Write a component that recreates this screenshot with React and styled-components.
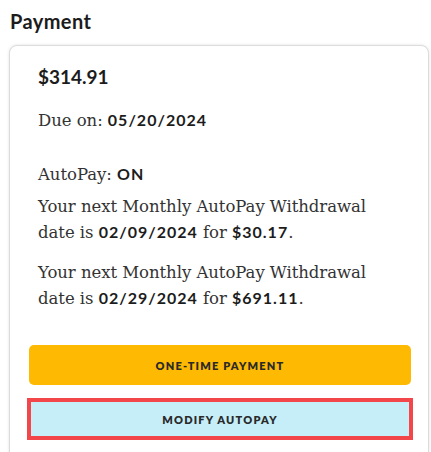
import React from 'react';
import styled, { createGlobalStyle } from 'styled-components';

const GlobalStyle = createGlobalStyle`
  body {
    margin: 0;
    background: #fff;
    font-family: "Lato", "Noto Sans", sans-serif;
    color: #1c1c1c;
  }
`;

const Page = styled.div`
  width: 431px;
  height: 452px;
  overflow: hidden;
  padding: 8px 2px 0 9px;
  box-sizing: border-box;
`;

const Heading = styled.h2`
  margin: 0 0 11px 1px;
  font-family: "Lato", sans-serif;
  font-weight: 700;
  font-size: 20px;
  letter-spacing: 0.4px;
  line-height: 26px;
  color: #1c1c1c;
`;

const Card = styled.div`
  border: 1px solid #dcdcdc;
  border-radius: 8px;
  box-shadow: 0 0 3px rgba(0, 0, 0, 0.12);
  padding: 19px 17px 40px 19px;
  background: #fff;
`;

const Details = styled.div`
  padding: 0 20px 0 9px;
`;

const Amount = styled.div`
  font-family: "Lato", sans-serif;
  font-weight: 700;
  font-size: 19px;
  line-height: 24px;
  margin-bottom: 19px;
`;

const Line = styled.p`
  margin: 0 0 ${(p) => p.$gap || 0}px;
  font-family: "DejaVu Serif", serif;
  font-size: 16.5px;
  line-height: 26px;
  color: #333;
  letter-spacing: -0.05px;
`;

const Strong = styled.b`
  font-family: "Lato", sans-serif;
  font-weight: 700;
  font-size: 16px;
  line-height: 1;
  letter-spacing: 1px;
  color: #1c1c1c;
`;

const Actions = styled.div`
  display: flex;
  flex-direction: column;
  gap: 13px;
  margin-top: 33px;
`;

const Button = styled.button`
  display: block;
  height: ${(p) => (p.$outlined ? 42 : 40)}px;
  border: ${(p) => (p.$outlined ? '4px solid #f2464b' : 'none')};
  border-radius: ${(p) => (p.$outlined ? 0 : 5)}px;
  background: ${(p) => p.$bg};
  font-family: "Lato", sans-serif;
  font-weight: 800;
  font-size: 11px;
  letter-spacing: 1.2px;
  color: #2a2a2a;
  box-sizing: border-box;
  margin: ${(p) => (p.$outlined ? '0 -2px' : '0')};
  width: ${(p) => (p.$outlined ? 'calc(100% + 4px)' : '100%')};
`;

export default function App() {
  return (
    <Page>
      <GlobalStyle />
      <Heading>Payment</Heading>
      <Card>
        <Details>
          <Amount>$314.91</Amount>
          <Line $gap={28}>Due on: <Strong>05/20/2024</Strong></Line>
          <Line $gap={6}>AutoPay: <Strong>ON</Strong></Line>
          <Line $gap={14}>
            Your next Monthly AutoPay Withdrawal<br />
            date is <Strong>02/09/2024</Strong> for <Strong>$30.17</Strong>.
          </Line>
          <Line>
            Your next Monthly AutoPay Withdrawal<br />
            date is <Strong>02/29/2024</Strong> for <Strong>$691.11</Strong>.
          </Line>
        </Details>
        <Actions>
          <Button $bg="#feb903">ONE-TIME PAYMENT</Button>
          <Button $bg="#c5eef9" $outlined>MODIFY AUTOPAY</Button>
        </Actions>
      </Card>
    </Page>
  );
}
